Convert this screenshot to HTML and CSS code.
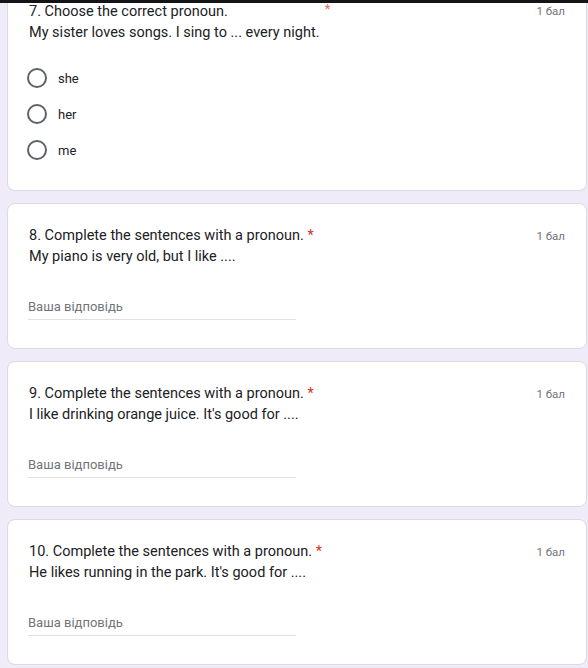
FILE: index.html
```html
<!DOCTYPE html>
<html lang="uk">
<head>
<meta charset="utf-8">
<title>Form</title>
<link rel="stylesheet" href="styles.css">
</head>
<body>
<div class="topbar"></div>
<main class="form">
  <section class="card card-first">
    <div class="head">
      <div class="q">
        <div class="title">7. Choose the correct pronoun.<span class="req req-far">*</span></div>
        <div class="desc">My sister loves songs. I sing to ... every night.</div>
      </div>
      <div class="points points-first">1 бал</div>
    </div>
    <div class="options">
      <label class="opt"><span class="radio"></span><span class="opt-text">she</span></label>
      <label class="opt"><span class="radio"></span><span class="opt-text">her</span></label>
      <label class="opt"><span class="radio"></span><span class="opt-text">me</span></label>
    </div>
  </section>

  <section class="card">
    <div class="head">
      <div class="q">
        <div class="title">8. Complete the sentences with a pronoun. <span class="req">*</span></div>
        <div class="desc">My piano is very old, but I like ....</div>
      </div>
      <div class="points">1 бал</div>
    </div>
    <div class="answer">Ваша відповідь</div>
  </section>

  <section class="card">
    <div class="head">
      <div class="q">
        <div class="title">9. Complete the sentences with a pronoun. <span class="req">*</span></div>
        <div class="desc">I like drinking orange juice. It's good for ....</div>
      </div>
      <div class="points">1 бал</div>
    </div>
    <div class="answer">Ваша відповідь</div>
  </section>

  <section class="card">
    <div class="head">
      <div class="q">
        <div class="title">10. Complete the sentences with a pronoun. <span class="req">*</span></div>
        <div class="desc">He likes running in the park. It's good for ....</div>
      </div>
      <div class="points">1 бал</div>
    </div>
    <div class="answer">Ваша відповідь</div>
  </section>
</main>
</body>
</html>
```
FILE: styles.css
```css
html, body {
  margin: 0;
  padding: 0;
}
body {
  background: #f0ebf8;
  font-family: Roboto, "Liberation Sans", sans-serif;
  color: #202124;
  height: 668px;
  overflow: hidden;
}
.topbar {
  position: fixed;
  top: 0;
  left: 0;
  right: 0;
  height: 3px;
  background: #141318;
  z-index: 2;
}
.form {
  display: flex;
  flex-direction: column;
  gap: 12px;
  margin-top: -2px;
}
.card {
  background: #fff;
  border: 1px solid #dadce0;
  border-radius: 8px;
  margin: 0 1px 0 7px;
  padding: 21px 21px 28px 21px;
}
.card-first {
  border-top: none;
  border-radius: 0 0 8px 8px;
  padding-top: 0;
  padding-bottom: 22px;
}
.head {
  display: flex;
  justify-content: space-between;
  align-items: flex-start;
}
.title {
  font-size: 14.5px;
  line-height: 21px;
  color: #202124;
}
.desc {
  font-size: 14.5px;
  line-height: 21px;
  color: #202124;
}
.req {
  color: #d93025;
  font-size: 14.5px;
}
.req-far {
  margin-left: 97px;
  font-size: 13px;
  vertical-align: 3px;
  color: #e06b60;
}
.points {
  font-size: 11.5px;
  line-height: 21px;
  color: #70757a;
  padding-top: 1px;
}
.points-first {
  padding-top: 3px;
}
.options {
  display: flex;
  flex-direction: column;
  margin-top: 17px;
}
.opt {
  display: flex;
  align-items: center;
  height: 36px;
  gap: 11px;
}
.radio {
  width: 16px;
  height: 16px;
  border: 2px solid #5f6368;
  border-radius: 50%;
  margin-left: -2px;
}
.opt-text {
  font-size: 13px;
  color: #202124;
}
.answer {
  margin-top: 29px;
  width: 268px;
  font-size: 13px;
  line-height: 20px;
  color: #70757a;
  padding-top: 1px;
  padding-bottom: 2px;
  border-bottom: 1px solid #e0e0e0;
  margin-left: -1px;
}
```
